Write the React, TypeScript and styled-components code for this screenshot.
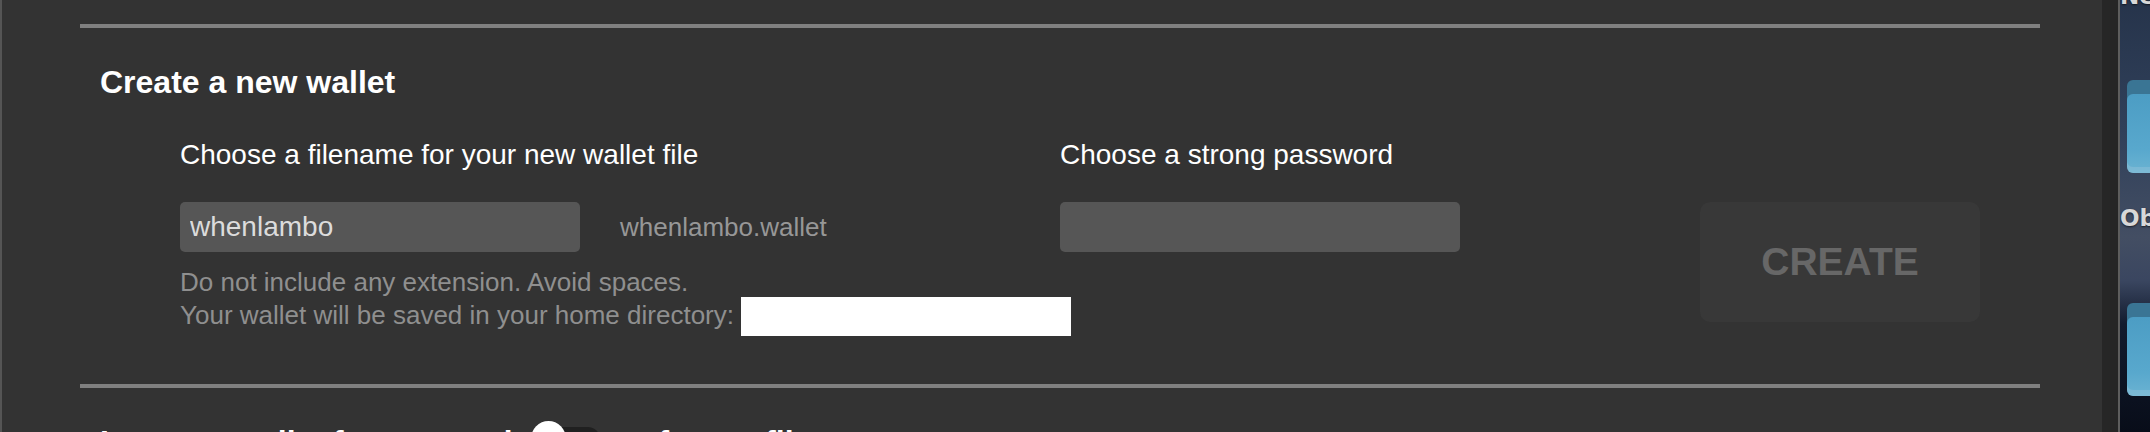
import React from "react";
import styled, { createGlobalStyle } from "styled-components";

const GlobalStyle = createGlobalStyle`
  html, body {
    margin: 0;
    padding: 0;
    background: #333333;
    overflow: hidden;
  }
  * { box-sizing: border-box; }
`;

const Screen = styled.div`
  display: flex;
  height: 432px;
  width: 2150px;
  overflow: hidden;
  font-family: "Liberation Sans", Arial, sans-serif;
`;

const Window = styled.div`
  flex: 1;
  display: flex;
  background: #333333;
  border-left: 2px solid #555555;
`;

const Content = styled.div`
  flex: 1;
  padding: 24px 62px 0 78px;
`;

const ScrollTrack = styled.div`
  width: 18px;
  background: #262626;
  border-right: 2px solid #5e5e5e;
`;

const Section = styled.section`
  border-top: 4px solid #808080;
`;

const SectionTitle = styled.h2`
  margin: 38px 0 0 20px;
  font-size: 32px;
  line-height: 1;
  font-weight: 700;
  color: #ffffff;
`;

const FormRow = styled.div`
  display: flex;
  align-items: flex-start;
  margin-top: 43px;
  margin-bottom: 52px;
  padding: 0 60px 0 100px;
`;

const Field = styled.div<{ $width: number }>`
  width: ${(p) => p.$width}px;
  display: flex;
  flex-direction: column;
`;

const Label = styled.label`
  font-size: 28px;
  line-height: 1;
  color: #ffffff;
  margin-bottom: 33px;
`;

const InputRow = styled.div`
  display: flex;
  align-items: center;
  gap: 40px;
`;

const TextInput = styled.input`
  width: 400px;
  height: 50px;
  border: none;
  outline: none;
  border-radius: 5px;
  background: #565656;
  padding: 0 10px;
  font-family: "Liberation Sans", Arial, sans-serif;
  font-size: 28px;
  color: #dcdcdc;
`;

const FilePreview = styled.span`
  font-size: 26px;
  line-height: 34px;
  color: #979797;
`;

const Hint = styled.p`
  margin: 14px 0 0 0;
  font-size: 26px;
  line-height: 33px;
  color: #8f8f8f;
  white-space: nowrap;
  height: 66px;
`;

const Redacted = styled.span`
  display: inline-block;
  width: 330px;
  height: 39px;
  background: #ffffff;
  vertical-align: middle;
  margin-top: -2px;
`;

const CreateButton = styled.button`
  margin-left: auto;
  margin-top: 61px;
  width: 280px;
  height: 120px;
  border: none;
  border-radius: 10px;
  background: #383838;
  color: #676767;
  font-family: "Liberation Sans", Arial, sans-serif;
  font-size: 39px;
  font-weight: 700;
  cursor: default;
`;

const ImportHeader = styled.div`
  display: flex;
  align-items: center;
  margin: 38px 0 0 20px;
  gap: 18px;
`;

const ImportTitle = styled.h2`
  margin: 0;
  font-size: 32px;
  line-height: 1;
  font-weight: 700;
  color: #ffffff;
`;

const Toggle = styled.span`
  position: relative;
  display: inline-block;
  width: 69px;
  height: 36px;
  margin-top: -6px;
`;

const ToggleTrack = styled.span`
  position: absolute;
  left: 14px;
  right: 0;
  top: 6px;
  height: 24px;
  border-radius: 12px;
  background: #202020;
`;

const ToggleKnob = styled.span`
  position: absolute;
  left: 0;
  top: 0;
  width: 35px;
  height: 36px;
  border-radius: 50%;
  background: #ffffff;
`;

const Desktop = styled.div`
  position: relative;
  width: 30px;
  overflow: hidden;
  background: linear-gradient(
    180deg,
    #26344b 0%,
    #30405a 30%,
    #434e63 55%,
    #3a4660 65%,
    #121b2e 75%,
    #080d19 100%
  );
`;

const Folder = styled.div<{ $top: number }>`
  position: absolute;
  left: 7px;
  top: ${(p) => p.$top}px;
  width: 60px;
  height: 93px;
`;

const FolderBack = styled.div`
  position: absolute;
  left: 0;
  top: 0;
  right: 0;
  height: 30px;
  border-radius: 6px 6px 0 0;
  background: #3a7594;
`;

const FolderFront = styled.div`
  position: absolute;
  left: 0;
  right: 0;
  top: 14px;
  bottom: 0;
  border-radius: 6px;
  background: linear-gradient(180deg, #4c9dc4 0%, #58a8cd 70%, #6bb3d2 100%);
  box-shadow: inset 0 -6px 0 rgba(160, 200, 220, 0.35);
`;

const DesktopLabel = styled.span<{ $top: number }>`
  position: absolute;
  left: 0;
  top: ${(p) => p.$top}px;
  font-family: "DejaVu Sans", sans-serif;
  font-size: 23px;
  font-weight: 700;
  color: #d8d8d8;
  white-space: nowrap;
  text-shadow: 0 1px 2px rgba(0, 0, 0, 0.6);
`;

export default function App() {
  return (
    <>
      <GlobalStyle />
      <Screen>
        <Window>
          <Content>
            <Section>
              <SectionTitle>Create a new wallet</SectionTitle>
              <FormRow>
                <Field $width={880}>
                  <Label>Choose a filename for your new wallet file</Label>
                  <InputRow>
                    <TextInput defaultValue="whenlambo" />
                    <FilePreview>whenlambo.wallet</FilePreview>
                  </InputRow>
                  <Hint>
                    Do not include any extension. Avoid spaces.
                    <br />
                    Your wallet will be saved in your home directory: <Redacted />
                  </Hint>
                </Field>
                <Field $width={400}>
                  <Label>Choose a strong password</Label>
                  <TextInput type="password" defaultValue="" />
                </Field>
                <CreateButton>CREATE</CreateButton>
              </FormRow>
            </Section>
            <Section>
              <ImportHeader>
                <ImportTitle>Import a wallet from a seed</ImportTitle>
                <Toggle>
                  <ToggleTrack />
                  <ToggleKnob />
                </Toggle>
                <ImportTitle>or from a file</ImportTitle>
              </ImportHeader>
            </Section>
          </Content>
          <ScrollTrack />
        </Window>
        <Desktop>
          <DesktopLabel $top={-17}>Ne</DesktopLabel>
          <Folder $top={80}>
            <FolderBack />
            <FolderFront />
          </Folder>
          <DesktopLabel $top={205}>Ob</DesktopLabel>
          <Folder $top={303}>
            <FolderBack />
            <FolderFront />
          </Folder>
        </Desktop>
      </Screen>
    </>
  );
}
